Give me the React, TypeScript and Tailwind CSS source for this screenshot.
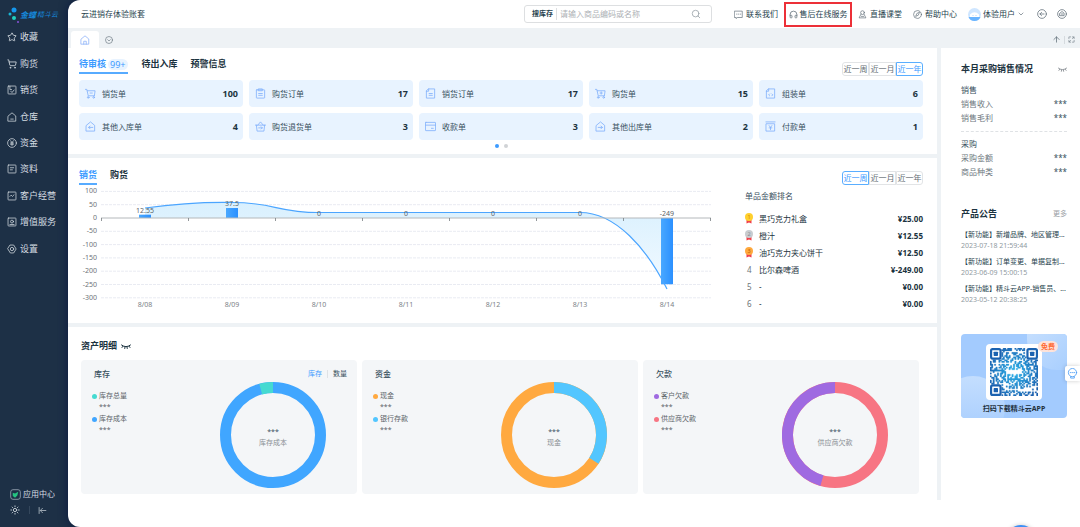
import * as React from "react";
import { ArrowUp, Headphones, Search, Star, ShoppingCart, Sun, ChevronDown } from "lucide-react";
import clsx from "clsx";

type IconProps = { className?: string; children: React.ReactNode };

function Svg({ className, children }: IconProps) {
  return (
    <svg viewBox="0 0 24 24" fill="none" stroke="currentColor" strokeWidth="1.800" strokeLinecap="round" strokeLinejoin="round" className={clsx("shrink-0", className)} aria-hidden="true">
      {children}
    </svg>
  );
}

const house = <path d="M3 9.5 12 2l9 7.5V22H3z" />;
const box = <rect x="2.5" y="2.5" width="19" height="19" rx="1.5" />;

const cart = (
  <>
    <path d="M1 3h3l3 14h13M5 6h17l-1.5 11" />
    <circle cx="7" cy="20.5" r="1.8" />
    <circle cx="19" cy="20.5" r="1.8" />
  </>
);

const menu = [
  { label: "收藏", icon: <Star className="size-[10px] shrink-0" /> },
  { label: "购货", icon: <ShoppingCart className="size-[10px] shrink-0" /> },
  { label: "销货", icon: <Svg className="size-[10px]">{box}<path d="M7 3v8h4M9 15l3 3 5-6" /></Svg> },
  { label: "仓库", icon: <Svg className="size-[10px]">{house}<path d="M9 17h6" /></Svg> },
  { label: "资金", icon: <Svg className="size-[10px]"><circle cx="12" cy="12" r="10.5" /><path d="m8.5 6.5 3.5 4.5 3.5-4.5M12 11v7M8.5 12h7M8.5 15h7" /></Svg> },
  { label: "资料", icon: <Svg className="size-[10px]">{box}<path d="M8 9h8M8 14h5" /></Svg> },
  { label: "客户经营", icon: <Svg className="size-[10px]">{box}<path d="m7 13 3-3 3 3 4-4" /></Svg> },
  { label: "增值服务", icon: <Svg className="size-[10px]">{box}<circle cx="12" cy="11" r="3.5" /><path d="M7 18h10" /></Svg> },
  { label: "设置", icon: <Svg className="size-[10px]"><path d="M8 2.5h8l6 9.5-6 9.5H8L2 12z" /><circle cx="12" cy="12" r="4" /></Svg> },
];

const orders = [
  { label: "销货单", count: 100, icon: <>{cart}<path d="M11 11h5" /></> },
  { label: "购货订单", count: 17, icon: <><rect x="3" y="4" width="18" height="18" rx="1" /><path d="M8 2h8v4H8zM8 12h8M8 16h8" /></> },
  { label: "销货订单", count: 17, icon: <><path d="M8 2h13v20H3V7zM8 2v5H3M9 12h7M9 16h7" /></> },
  { label: "购货单", count: 15, icon: <>{cart}<path d="M11 11h5M13.5 8.5v5" /></> },
  { label: "组装单", count: 6, icon: <><path d="M8 2h13v20H3V7zM8 2v5H3M10 13l-2 2 2 2M15 13l2 2-2 2" /></> },
  { label: "其他入库单", count: 4, icon: <>{house}<path d="M17 14H8M11 11l-3 3 3 3" /></> },
  { label: "购货退货单", count: 3, icon: <><path d="M1 9h22M3 9l1.500 13h15L21 9M6 9l6-7 6 7M8 15h8M13.500 12.500 16 15l-2.500 2.500" /></> },
  { label: "收款单", count: 3, icon: <><rect x="1" y="3" width="22" height="18" rx="1" /><path d="M1 9h22M14 16h4" /></> },
  { label: "其他出库单", count: 2, icon: <>{house}<path d="M7 14h9M13 11l3 3-3 3" /></> },
  { label: "付款单", count: 1, icon: <><path d="M2 2h20M3 6h18v16H3zM9 10l3 4 3-4M12 14v5M9 15h6" /></> },
];

const ranking = [
  { name: "黑巧克力礼盒", amount: "¥25.00" },
  { name: "橙汁", amount: "¥12.55" },
  { name: "油巧克力夹心饼干", amount: "¥12.50" },
  { name: "比尔森啤酒", amount: "¥-249.00" },
  { name: "-", amount: "¥0.00" },
  { name: "-", amount: "¥0.00" },
];

const news = [
  { title: "【新功能】新增品牌、地区管理...", time: "2023-07-18 21:59:44" },
  { title: "【新功能】订单变更、单据复制...", time: "2023-06-09 15:00:15" },
  { title: "【新功能】精斗云APP-销售员、...", time: "2023-05-12 20:38:25" },
];

const assets = [
  {
    title: "库存",
    center: "库存成本",
    switchable: true,
    base: "#40a6ff",
    slice: "#45dad1",
    from: -15,
    to: 0,
    legend: [{ label: "库存总量", color: "#45dad1" }, { label: "库存成本", color: "#40a6ff" }],
  },
  {
    title: "资金",
    center: "现金",
    base: "#ffa940",
    slice: "#52c6ff",
    from: 0,
    to: 123,
    legend: [{ label: "现金", color: "#ffa940" }, { label: "银行存款", color: "#52c6ff" }],
  },
  {
    title: "欠款",
    center: "供应商欠款",
    base: "#f77583",
    slice: "#9f6ae1",
    from: 196,
    to: 360,
    legend: [{ label: "客户欠款", color: "#9f6ae1" }, { label: "供应商欠款", color: "#f77583" }],
  },
];

function ClosedEye({ className }: { className?: string }) {
  return (
    <svg viewBox="0 0 20 10" fill="none" stroke="currentColor" strokeWidth="2" strokeLinecap="round" className={className} aria-hidden="true">
      <path d="M1 2q9 7 18 0M4 4.500 2 7M8 6l-.5 3M12 6l.5 3M16 4.500 18 7" />
    </svg>
  );
}

function Segment({ initial }: { initial: number }) {
  const [active, setActive] = React.useState(initial);
  return (
    <div className="flex h-[14px] text-[8px] leading-3">
      {["近一周", "近一月", "近一年"].map((label, i) => (
        <button
          key={label}
          type="button"
          onClick={() => setActive(i)}
          className={clsx(
            "flex w-[27px] items-center justify-center border whitespace-nowrap first:rounded-l-[3px] last:rounded-r-[3px]",
            i === active ? "border-[#5aaeff] text-[#3d9bff]" : "border-[#e2e4e6] text-[#666e75]"
          )}
        >
          {label}
        </button>
      ))}
    </div>
  );
}

function Tab({ active, children, onClick }: { active: boolean; children: React.ReactNode; onClick: () => void }) {
  return (
    <button
      type="button"
      onClick={onClick}
      className={clsx(
        "flex h-[18px] items-center gap-[2px] border-b-2 text-[9px] font-bold leading-3",
        active ? "border-[#57abff] text-[#3d9bff]" : "border-transparent text-[#1c3340]"
      )}
    >
      {children}
    </button>
  );
}

function Sidebar() {
  return (
    <aside className="flex w-[68px] shrink-0 flex-col text-[#d5dce2]">
      <div className="flex h-6 items-center pl-[7px] pt-[6px] italic text-[#1688dc]">
        <svg viewBox="0 0 13 18" className="h-[18px] w-[13px] shrink-0" aria-hidden="true">
          <circle cx="7" cy="4" r="2.500" fill="#1597ee" />
          <circle cx="3" cy="8" r="1.500" fill="#17b6d6" />
          <circle cx="7" cy="12" r="2" fill="#1fd0c0" />
          <circle cx="11" cy="16" r="1" fill="#8a52dc" />
        </svg>
        <span className="whitespace-nowrap text-[8px] font-bold leading-3">金蝶</span>
        <span className="ml-px whitespace-nowrap text-[7px] leading-3">精斗云</span>
      </div>
      <nav className="flex h-[238px] flex-col">
        {menu.map((item) => (
          <a key={item.label} href="#" className="flex flex-1 items-center gap-[3px] whitespace-nowrap pl-[7px] text-[9px] leading-3">
            {item.icon}
            {item.label}
          </a>
        ))}
      </nav>
      <div className="mt-auto flex flex-col gap-[5px] pb-3 pl-[10px]">
        <a href="#" className="flex items-center gap-[2px] whitespace-nowrap text-[8px] leading-3">
          <svg viewBox="0 0 24 24" className="size-[11px]" aria-hidden="true">
            <rect x="1.500" y="1.500" width="21" height="21" rx="5" fill="none" stroke="#8d9aa8" strokeWidth="2" />
            <path d="M6 8l5 2 7-4-2 8-5 5-5-4z" fill="#25c281" />
          </svg>
          应用中心
        </a>
        <div className="flex items-center">
          <button type="button" aria-label="主题"><Sun className="size-[10px]" /></button>
          <span className="ml-[9px] h-2 w-px bg-[#34475c]" />
          <button type="button" aria-label="收起" className="ml-2">
            <Svg className="size-[9px]"><path d="M3 4v16M21 12H7M12 6l-6 6 6 6" /></Svg>
          </button>
        </div>
      </div>
    </aside>
  );
}

function Header() {
  return (
    <header className="flex h-7 items-center whitespace-nowrap px-[13px] text-[8px] leading-3 text-[#263f4d]">
      <span>云进销存体验账套</span>
      <div className="ml-auto flex h-[18px] w-[188px] items-center rounded-[3px] border border-[#dddfe1] pl-[7px] pr-[10px]">
        <label htmlFor="search" className="border-r border-[#dddfe1] pr-[3px] text-[7px] font-bold">搜库存</label>
        <input id="search" placeholder="请输入商品编码或名称" className="min-w-0 flex-1 pl-[3px] outline-none placeholder:text-[#adb1b5]" />
        <Search className="size-[10px] text-[#9ba3a9]" />
      </div>
      <a href="#" className="ml-[22px] flex items-center gap-[3px]">
        <Svg className="size-[9px] text-[#5f6d77]"><path d="M2 3h20v17H9l-3 3v-3H2zM7 11h1M12 11h1M17 11h1" /></Svg>
        联系我们
      </a>
      <a href="#" className="ml-[6px] flex h-[25px] w-[68px] items-center justify-center gap-[2px] border-2 border-[#ec3038]">
        <Headphones className="size-[9px] text-[#5f6d77]" />
        售后在线服务
      </a>
      <a href="#" className="ml-[6px] flex items-center gap-[3px]">
        <Svg className="size-[9px] text-[#5f6d77]"><circle cx="12" cy="7" r="5" /><path d="M8 11 3 21h18l-5-10M9 17h6" /></Svg>
        直播课堂
      </a>
      <a href="#" className="ml-[11px] flex items-center gap-[3px]">
        <Svg className="size-[9px] text-[#5f6d77]"><circle cx="12" cy="12" r="10.500" /><path d="m17 7-3 7-7 3 3-7z" /></Svg>
        帮助中心
      </a>
      <button type="button" className="ml-[11px] flex items-center gap-[2px]">
        <svg viewBox="0 0 26 26" className="size-[13px]" aria-hidden="true">
          <circle cx="13" cy="13" r="13" fill="#cfe6ff" />
          <path d="M4 19v-6q9-9 18 0v6z" fill="#fff" />
          <path d="M1 18h24q-3 8-12 8T1 18" fill="#69b4ff" />
          <path d="M10 15v1M16 15v1" stroke="#69b4ff" strokeWidth="2" />
        </svg>
        体验用户
        <ChevronDown className="size-2 text-[#5f6d77]" />
      </button>
      <button type="button" aria-label="返回" className="ml-3 text-[#5f6d77]">
        <Svg className="size-[10px]"><circle cx="12" cy="12" r="10.500" /><path d="M17 12H7M11 8l-4 4 4 4" /></Svg>
      </button>
      <button type="button" aria-label="设置" className="ml-[10px] text-[#5f6d77]">
        <Svg className="size-[10px]"><circle cx="12" cy="12" r="10.500" /><path d="M7 10l5-4 5 4v6H7zM10 12h4" /></Svg>
      </button>
    </header>
  );
}

function TabBar() {
  return (
    <div className="flex h-5 items-end bg-[#eef2f5] pl-[3px] pr-[5px] text-[#5f6d77]">
      <button type="button" aria-label="首页" className="flex h-[17px] w-[28px] items-center justify-center rounded-t-[3px] bg-white text-[#88aef8]">
        <Svg className="size-[10px]">{house}<path d="M9 22v-7h6v7" /></Svg>
      </button>
      <button type="button" aria-label="更多标签" className="flex h-[17px] w-5 items-center justify-center">
        <Svg className="size-2"><circle cx="12" cy="12" r="10.500" /><path d="m8 11 4 4 4-4" /></Svg>
      </button>
      <div className="ml-auto flex h-[17px] items-center gap-[3px]">
        <button type="button" aria-label="置顶"><ArrowUp className="size-[9px]" /></button>
        <span className="h-2 w-px bg-[#d5dade]" />
        <button type="button" aria-label="全屏">
          <Svg className="size-[7px]"><path d="M3 9V3h6M15 3h6v6M21 15v6h-6M9 21H3v-6M15 9l5-5M4 20l5-5" /></Svg>
        </button>
      </div>
    </div>
  );
}

function Orders() {
  const [tab, setTab] = React.useState(0);
  return (
    <section className="bg-white pb-[6px] pl-[11px] pr-[14px] pt-2">
      <div className="flex h-5 items-start gap-[13px]">
        <Tab active={tab === 0} onClick={() => setTab(0)}>
          待审核
          <span className="rounded-full bg-[#e8f3ff] pl-[2px] pr-[3px] text-[9px] font-normal leading-[11px]">99+</span>
        </Tab>
        <Tab active={tab === 1} onClick={() => setTab(1)}>待出入库</Tab>
        <Tab active={tab === 2} onClick={() => setTab(2)}>预警信息</Tab>
        <div className="ml-auto self-end">
          <Segment initial={2} />
        </div>
      </div>
      <div className="mt-1 grid grid-cols-5 gap-[6px]">
        {orders.map((order) => (
          <a key={order.label} href="#" className="flex h-[27px] items-center rounded-[4px] bg-[#e8f3ff] pl-[6px] pr-[5px]">
            <Svg className="size-[11px] text-[#82b1fb]">{order.icon}</Svg>
            <span className="ml-[6px] text-[8px] leading-3 text-[#38505e]">{order.label}</span>
            <span className="ml-auto text-[9px] font-bold leading-3 text-[#1c3340]">{order.count}</span>
          </a>
        ))}
      </div>
      <div className="mt-1 flex h-1 justify-center gap-[5px]">
        <button type="button" aria-label="第1页" className="size-1 rounded-full bg-[#3d9bff]" />
        <button type="button" aria-label="第2页" className="size-1 rounded-full bg-[#d0d3d6]" />
      </div>
    </section>
  );
}

const days = ["8/08", "8/09", "8/10", "8/11", "8/12", "8/13", "8/14"];
const values = [12.55, 37.5, 0, 0, 0, 0, -249];
const zero = 32;
const scale = 0.266;
const step = 87;

function Chart() {
  const line = "M66 22C95 18 124 16 153 16.500C197 16.500 197 26.500 240 26.500H501C537 26.500 568 63 588 103";
  return (
    <svg viewBox="0 0 644 124" className="h-auto w-full" fontSize="7" role="img" aria-label="销货趋势">
      <defs>
        <linearGradient id="area" x1="0" y1="0" x2="0" y2="1">
          <stop offset="0" stopColor="#d9f0fe" />
          <stop offset="1" stopColor="#f2faff" />
        </linearGradient>
        <linearGradient id="bar" x1="0" y1="0" x2="1" y2="0">
          <stop offset="0" stopColor="#49a8ff" />
          <stop offset="1" stopColor="#2b90ff" />
        </linearGradient>
      </defs>
      {[100, 50, 0, -50, -100, -150, -200, -250, -300].map((v) => (
        <g key={v}>
          {v !== 0 && <path d={`M22 ${zero - v * scale}H632`} stroke="#e9ebf2" strokeDasharray="3 1" />}
          <text x="18" y={zero - v * scale + 2} textAnchor="end" fill="#6e7479">{v}</text>
        </g>
      ))}
      <path d={`${line}V${zero}H66z`} fill="url(#area)" />
      {values.map((v, i) => v !== 0 && (
        <rect key={i} x={60 + i * step} y={v > 0 ? zero - v * scale : zero} width="12" height={Math.abs(v) * scale} fill="url(#bar)" />
      ))}
      <path d={line} fill="none" stroke="#4ba5ff" strokeWidth="1.200" />
      <path d={`M22 ${zero}H632`} stroke="#b4b8bb" />
      {Array.from({ length: 8 }, (_, i) => (
        <path key={i} d={`M${22.5 + i * step} ${zero}v3`} stroke="#777d82" strokeWidth="0.800" />
      ))}
      {days.map((day, i) => (
        <g key={day} textAnchor="middle">
          <text x={66 + i * step} y={values[i] > 0 ? zero - values[i] * scale - 2 : 30} fill="#5c6469">{values[i]}</text>
          <text x={66 + i * step} y="121" fill="#7c8287">{day}</text>
        </g>
      ))}
    </svg>
  );
}

function Medal({ place }: { place: number }) {
  return (
    <svg viewBox="0 0 16 22" className="h-[11px] w-2" aria-label={`第${place}名`}>
      <path d="M3 12h10v9l-5-2-5 2z" fill="#f0414a" />
      <circle cx="8" cy="8" r="8" fill={["#ffd02e", "#c8ccd0", "#ffa93e"][place - 1]} />
      <text x="8" y="12" fontSize="11" textAnchor="middle" fill={["#d48600", "#8a8f94", "#b85f00"][place - 1]}>{place}</text>
    </svg>
  );
}

function Sales() {
  const [tab, setTab] = React.useState(0);
  return (
    <section className="flex bg-white pb-[11px] pl-[11px] pr-[14px]">
      <div className="min-w-0 flex-1 pt-[9px]">
        <div className="mb-[1px] flex gap-[13px]">
          <Tab active={tab === 0} onClick={() => setTab(0)}>销货</Tab>
          <Tab active={tab === 1} onClick={() => setTab(1)}>购货</Tab>
        </div>
        <Chart />
      </div>
      <div className="ml-[22px] w-[178px] shrink-0 pt-[13px]">
        <div className="flex justify-end">
          <Segment initial={0} />
        </div>
        <h3 className="mt-[5px] text-[8px] leading-3 text-[#38505e]">单品金额排名</h3>
        <table className="mt-2 w-full text-[8px] leading-3 text-[#1c3340]">
          <tbody>
            {ranking.map((row, i) => (
              <tr key={i} className="h-[17px]">
                <td className="w-[14px] p-0 text-[#6e7479]">{i < 3 ? <Medal place={i + 1} /> : <span className="pl-[2px]">{i + 1}</span>}</td>
                <td className="p-0">{row.name}</td>
                <td className="p-0 text-right font-bold">{row.amount}</td>
              </tr>
            ))}
          </tbody>
        </table>
      </div>
    </section>
  );
}

function point(deg: number) {
  const a = (deg * Math.PI) / 180;
  return `${53 + 47.5 * Math.sin(a)} ${53 - 47.5 * Math.cos(a)}`;
}

function Assets() {
  return (
    <section className="flex-1 bg-white pb-[6px] pl-[13px] pr-[18px] pt-[13px]">
      <h2 className="flex items-center gap-1 text-[9px] font-bold leading-3 text-[#1c3340]">
        资产明细
        <ClosedEye className="h-[5px] w-[10px]" />
      </h2>
      <div className="mt-2 grid grid-cols-3 gap-[5px]">
        {assets.map((item) => (
          <article key={item.title} className="flex h-[134px] flex-col rounded-[4px] bg-[#f4f6f8] pl-[11px] pr-[10px] pt-2">
            <div className="flex items-center text-[8px] leading-3 text-[#38505e]">
              <h3 className="pl-[2px] font-medium">{item.title}</h3>
              {item.switchable && (
                <div className="ml-auto flex text-[7px]">
                  <button type="button" className="pr-[5px] text-[#3d9bff]">库存</button>
                  <span className="my-[2px] w-px bg-[#dfe2e5]" />
                  <button type="button" className="pl-[5px]">数量</button>
                </div>
              )}
            </div>
            <div className="flex justify-between pr-[21px]">
              <ul className="pt-[10px] text-[7px] leading-3 text-[#5c6469]">
                {item.legend.map((row) => (
                  <li key={row.label} className="flex h-[23px] gap-[2px]">
                    <span className="mt-1 size-[5px] shrink-0 rounded-full" style={{ background: row.color }} />
                    <span>
                      {row.label}
                      <span className="block leading-[10px]">***</span>
                    </span>
                  </li>
                ))}
              </ul>
              <svg viewBox="0 0 106 106" className="mt-[2px] size-[106px] shrink-0" textAnchor="middle" role="img" aria-label={item.title}>
                <circle cx="53" cy="53" r="47.500" fill="none" stroke={item.base} strokeWidth="11" />
                <path d={`M${point(item.from)}A47.500 47.500 0 0 1 ${point(item.to)}`} fill="none" stroke={item.slice} strokeWidth="11" />
                <text x="53" y="52" fontSize="7" fill="#38505e">***</text>
                <text x="53" y="63" fontSize="7" fill="#8a9095">{item.center}</text>
              </svg>
            </div>
          </article>
        ))}
      </div>
    </section>
  );
}

const qrSize = 33;

// position markers sit in three corners, the rest is filled with modules
function qrPath() {
  let seed = 71;
  let d = "";
  for (let y = 0; y < qrSize; y++) {
    for (let x = 0; x < qrSize; x++) {
      seed = (seed * 1103515245 + 12345) % 2147483648;
      const marker = (x < 8 && y < 8) || (x > qrSize - 9 && y < 8) || (x < 8 && y > qrSize - 9);
      const logo = x > 10 && x < 22 && y > 14 && y < 18;
      if (!marker && !logo && (seed >> 12) % 2 === 0) d += `M${x} ${y}h1v1h-1z`;
    }
  }
  return d;
}

function QrCode() {
  return (
    <svg viewBox="0 0 33 33" className="size-12" role="img" aria-label="二维码">
      <defs>
        <radialGradient id="qr" gradientUnits="userSpaceOnUse" cx="16.500" cy="16.500" r="20">
          <stop offset="0" stopColor="#2cb3ea" />
          <stop offset="1" stopColor="#1b5fae" />
        </radialGradient>
      </defs>
      <path d={qrPath()} fill="url(#qr)" stroke="url(#qr)" strokeWidth="0.200" />
      {[[0, 0], [25, 0], [0, 25]].map(([x, y]) => (
        <g key={`${x}-${y}`} fill="#1b62b0">
          <rect x={x + 0.75} y={y + 0.75} width="6.500" height="6.500" rx="1" fill="none" stroke="#1b62b0" strokeWidth="1.500" />
          <rect x={x + 2.5} y={y + 2.5} width="3" height="3" rx="0.500" />
        </g>
      ))}
    </svg>
  );
}

function Summary({ title, rows }: { title: string; rows: string[] }) {
  return (
    <div className="text-[8px] text-[#6e7880]">
      <h3 className="leading-[14px] text-[#38505e]">{title}</h3>
      <dl>
        {rows.map((row) => (
          <div key={row} className="flex h-[14px] items-center justify-between">
            <dt>{row}</dt>
            <dd className="text-[#38505e]">***</dd>
          </div>
        ))}
      </dl>
    </div>
  );
}

function RightPanel() {
  return (
    <aside className="w-[139px] shrink-0 bg-white pl-5 pr-[13px] pt-[15px]">
      <div className="flex items-center justify-between">
        <h2 className="whitespace-nowrap text-[9px] font-bold leading-3 text-[#1c3340]">本月采购销售情况</h2>
        <ClosedEye className="h-[5px] w-[9px] text-[#8a9095]" />
      </div>
      <div className="mt-2">
        <Summary title="销售" rows={["销售收入", "销售毛利"]} />
        <div className="mb-[5px] mt-[6px] border-t border-dashed border-[#dfe2e5]" />
        <Summary title="采购" rows={["采购金额", "商品种类"]} />
      </div>
      <div className="mt-[29px] flex items-center justify-between">
        <h2 className="text-[9px] font-bold leading-3 text-[#1c3340]">产品公告</h2>
        <a href="#" className="text-[7px] leading-3 text-[#9aa0a5]">更多</a>
      </div>
      <ul className="mt-[9px] flex flex-col gap-[5px]">
        {news.map((item) => (
          <li key={item.time} className="whitespace-nowrap text-[7px] leading-[11px]">
            <a href="#" className="block text-[#263f4d]">{item.title}</a>
            <time className="block text-[#8f9a9f]">{item.time}</time>
          </li>
        ))}
      </ul>
      <div className="relative mt-[29px] flex h-[84px] flex-col items-center overflow-hidden rounded-[4px] bg-[#a3cbfe] pt-[10px]">
        <div className="absolute -left-5 top-[42px] size-[64px] rounded-full bg-linear-to-b from-[#c4defe] to-[#a3cbfe]" />
        <div className="absolute right-0 top-0 h-9 w-10 rounded-bl-[30px] bg-linear-to-br from-[#c4defe] to-[#a9cffe]" />
        <div className="relative flex size-14 items-center justify-center rounded-[4px] bg-white">
          <QrCode />
        </div>
        <span className="absolute right-[9px] top-[7px] rounded-full bg-[#fde3da] px-[3px] text-[7px] font-bold leading-[11px] text-[#ff6a33]">免费</span>
        <p className="relative mt-[3px] text-[7px] font-bold leading-3 text-[#22303b]">扫码下载精斗云APP</p>
      </div>
    </aside>
  );
}

export default function App() {
  return (
    <div className="relative flex min-h-screen overflow-hidden bg-[#1d3046] font-['Noto_Sans','Noto_Sans_CJK_SC',sans-serif]">
      <Sidebar />
      <main className="min-w-0 flex-1 overflow-hidden rounded-l-[12px] bg-white shadow-[0_0_10px_#0b1a40]">
        <Header />
        <TabBar />
        <div className="flex gap-1 bg-[#eef2f5]">
          <div className="flex min-w-0 flex-1 flex-col gap-1">
            <Orders />
            <Sales />
            <Assets />
          </div>
          <RightPanel />
        </div>
      </main>
      <button type="button" aria-label="在线客服" className="absolute right-0 top-[366px] flex size-[15px] items-center justify-center rounded-l-[2px] bg-white text-[#4a9cf5] shadow-[0_0_4px_#0003]">
        <Svg className="size-[11px]"><circle cx="12" cy="10" r="9" /><path d="M7 10h2M12 10h.5M15 10h2M8 19v3h8v-3" /></Svg>
      </button>
      <button type="button" aria-label="帮助" className="absolute -bottom-[28px] right-11 size-[30px] rounded-full bg-[#3d8ff5] shadow-[0_0_4px_#0003]" />
    </div>
  );
}
